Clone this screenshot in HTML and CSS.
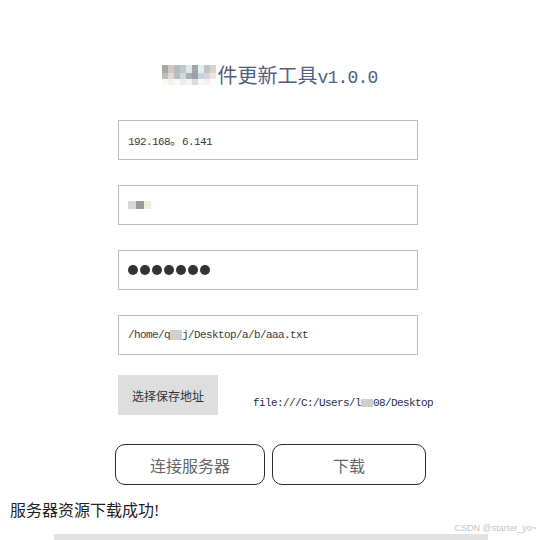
FILE: index.html
```html
<!DOCTYPE html>
<html lang="zh-CN">
<head>
    <meta charset="UTF-8">
    <meta name="viewport" content="width=device-width, initial-scale=1.0">
    <title>软件更新工具</title>
    <link rel="stylesheet" href="styles.css">
</head>
<body>
    <h1 class="title">
        <span class="mosaic title-mosaic">
            <i style="background:#a8a8a8"></i><i style="background:#c9c9c9"></i><i style="background:#b4bcbf"></i><i style="background:#c2c8c9"></i><i style="background:#dfe8ec"></i><i style="background:#a1a5a7"></i><i style="background:#e2f0f6"></i><i style="background:#bfc4c7"></i><i style="background:#d8d4cf"></i>
            <i style="background:#bdbdbd"></i><i style="background:#e9d9cc"></i><i style="background:#b9bfc0"></i><i style="background:#d4d8d9"></i><i style="background:#a9b0b3"></i><i style="background:#9aa1a4"></i><i style="background:#c8d6dc"></i><i style="background:#d3d7da"></i><i style="background:#e8e4e9"></i>
            <i style="background:#fbf8f6"></i><i style="background:#f6efea"></i><i style="background:#f9f9f9"></i><i style="background:#ececec"></i><i style="background:#fbf3ee"></i><i style="background:#d9dde0"></i><i style="background:#f7f7f7"></i><i style="background:#f2f2f4"></i><i style="background:#fdfdfd"></i>
        </span>件更新工具<span class="version">v1.0.0</span>
    </h1>

    <div class="form">
        <div class="field">192.168<span class="cjk">。</span>6.141</div>
        <div class="field">
            <span class="mosaic user-mosaic">
                <i style="background:#d8d6d2"></i><i style="background:#9b98a6"></i><i style="background:#f4eed8"></i>
            </span>
        </div>
        <div class="field password">
            <span class="dot"></span><span class="dot"></span><span class="dot"></span><span class="dot"></span><span class="dot"></span><span class="dot"></span><span class="dot"></span>
        </div>
        <div class="field">/home/q<span class="blot"></span>j/Desktop/a/b/aaa.txt</div>

        <div class="pick-row">
            <button type="button" class="pick-btn">选择保存地址</button>
            <span class="save-path">file:///C:/Users/l<span class="blot"></span>08/Desktop</span>
        </div>
    </div>

    <div class="actions">
        <button type="button" class="action-btn connect">连接服务器</button>
        <button type="button" class="action-btn download">下载</button>
    </div>

    <p class="status">服务器资源下载成功!</p>
    <div class="progress"></div>

    <span class="watermark">CSDN @starter_yo~</span>
</body>
</html>
```

FILE: styles.css
```css
body {
    margin: 0;
    width: 540px;
    height: 540px;
    overflow: hidden;
    position: relative;
    background: #fff;
    font-family: "Liberation Serif", "Noto Sans CJK SC", serif;
    color: #333;
}
.title {
    margin: 0;
    padding-top: 63px;
    font-size: 20px;
    line-height: 24px;
    font-weight: normal;
    text-align: center;
    color: #50607e;
    font-family: "Noto Sans CJK SC", sans-serif;
}
.version {
    font-family: "Liberation Mono", monospace;
    font-size: 18px;
    letter-spacing: -0.8px;
}
.mosaic {
    display: inline-grid;
    vertical-align: top;
}
.mosaic i {
    display: block;
}
.title-mosaic {
    grid-template-columns: repeat(9, 6px);
    grid-template-rows: 8px 6px 6px;
    margin-top: 2px;
    margin-right: 1px;
}
.user-mosaic {
    grid-template-columns: 8px 8px 7px;
    grid-template-rows: 8px;
    vertical-align: middle;
}
.form {
    margin-top: 30px;
    padding-left: 118px;
    display: flex;
    flex-direction: column;
    gap: 25px;
}
.field {
    box-sizing: border-box;
    width: 300px;
    height: 40px;
    border: 1px solid #bdbdbd;
    padding-left: 9px;
    line-height: 38px;
    font-family: "Liberation Mono", "Noto Sans CJK SC", monospace;
    font-size: 11px;
    letter-spacing: -0.6px;
    color: #3a3a3a;
}
.cjk {
    font-family: "Noto Sans CJK SC", sans-serif;
    font-size: 12px;
    letter-spacing: 0;
}
.blot {
    display: inline-block;
    width: 12px;
    height: 10px;
    vertical-align: middle;
    background: #cfcfcf;
}
.password {
    display: flex;
    align-items: center;
    gap: 2px;
}
.dot {
    width: 10px;
    height: 10px;
    border-radius: 50%;
    background: #333;
}
.pick-row {
    margin-top: -5px;
    display: flex;
    align-items: flex-end;
    gap: 35px;
}
.pick-btn {
    width: 100px;
    height: 40px;
    border: none;
    background: #dedede;
    color: #333;
    font-family: "Noto Sans CJK SC", sans-serif;
    font-size: 12px;
    padding: 0;
}
.save-path {
    padding-bottom: 6px;
    font-family: "Liberation Mono", monospace;
    font-size: 11px;
    letter-spacing: -0.6px;
    color: #1f2d4d;
}
.save-path .blot {
    height: 8px;
}
.actions {
    margin-top: 29px;
    padding-left: 115px;
    display: flex;
    gap: 7px;
}
.action-btn {
    height: 41px;
    background: #fff;
    border: 1px solid #2b2b2b;
    border-radius: 10px;
    color: #666;
    font-family: "Noto Sans CJK SC", sans-serif;
    font-size: 16px;
    padding: 0;
}
.connect {
    width: 150px;
}
.download {
    width: 154px;
}
.status {
    margin: 16px 0 0 10px;
    font-size: 16px;
    line-height: 20px;
    color: #222;
}
.progress {
    margin: 13px 0 0 54px;
    width: 434px;
    height: 6px;
    background: #e2e2e2;
}
.watermark {
    position: absolute;
    right: 3px;
    bottom: 7px;
    font-family: "Liberation Sans", Arial, sans-serif;
    font-size: 9px;
    color: #c4c4c4;
}
```
